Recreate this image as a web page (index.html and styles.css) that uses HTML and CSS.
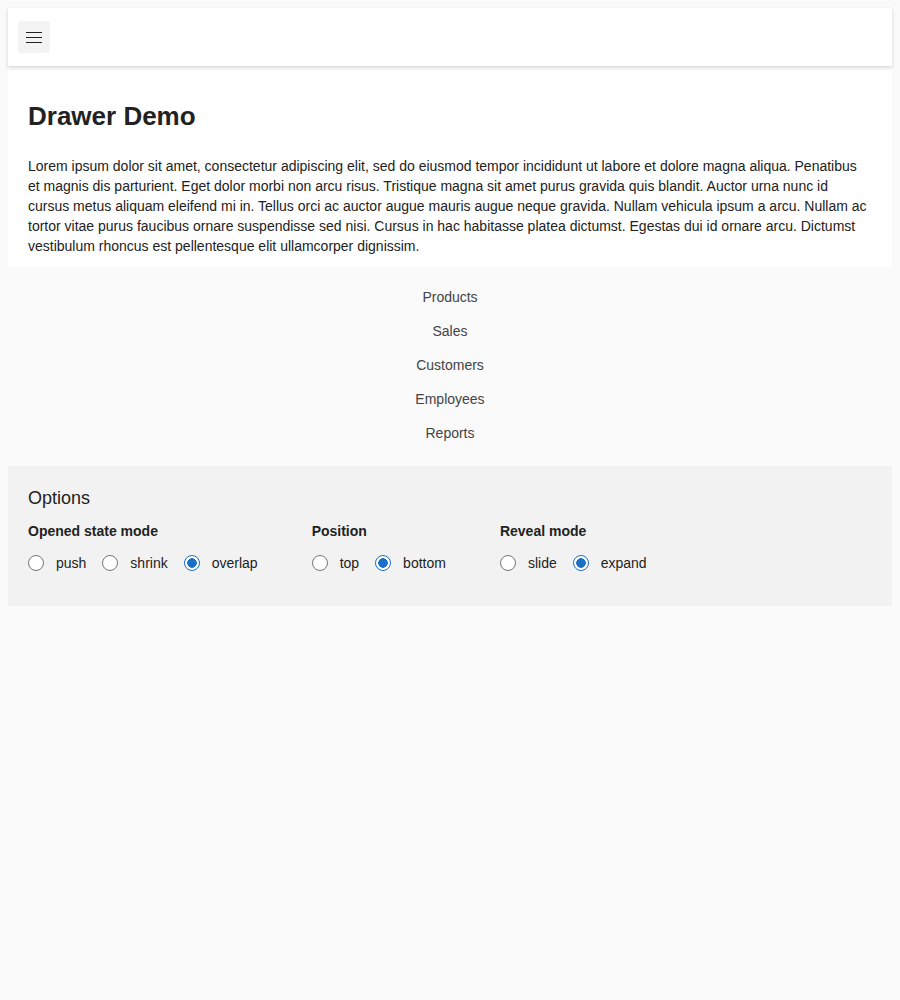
FILE: index.html
```html
<!DOCTYPE html>
<html lang="en">
<head>
<meta charset="utf-8">
<title>Drawer Demo</title>
<link rel="stylesheet" href="styles.css">
</head>
<body>
<header class="toolbar">
  <button class="menu-btn" type="button" aria-label="Menu">
    <svg width="16" height="12" viewBox="0 0 16 12"><path d="M0 1.5H16M0 6.5H16M0 11.5H16" stroke="#222" stroke-width="1" fill="none"/></svg>
  </button>
</header>
<main class="content">
  <h1 class="title">Drawer Demo</h1>
  <p class="text">Lorem ipsum dolor sit amet, consectetur adipiscing elit, sed do eiusmod tempor incididunt ut labore et dolore magna aliqua. Penatibus et magnis dis parturient. Eget dolor morbi non arcu risus. Tristique magna sit amet purus gravida quis blandit. Auctor urna nunc id cursus metus aliquam eleifend mi in. Tellus orci ac auctor augue mauris augue neque gravida. Nullam vehicula ipsum a arcu. Nullam ac tortor vitae purus faucibus ornare suspendisse sed nisi. Cursus in hac habitasse platea dictumst. Egestas dui id ornare arcu. Dictumst vestibulum rhoncus est pellentesque elit ullamcorper dignissim.</p>
</main>
<nav class="drawer">
  <div class="drawer-item">Products</div>
  <div class="drawer-item">Sales</div>
  <div class="drawer-item">Customers</div>
  <div class="drawer-item">Employees</div>
  <div class="drawer-item">Reports</div>
</nav>
<section class="options">
  <div class="options-title">Options</div>
  <div class="groups">
    <div class="group">
      <div class="group-label">Opened state mode</div>
      <div class="radios">
        <label class="radio"><input type="radio" name="mode"><span>push</span></label>
        <label class="radio"><input type="radio" name="mode"><span>shrink</span></label>
        <label class="radio"><input type="radio" name="mode" checked><span>overlap</span></label>
      </div>
    </div>
    <div class="group">
      <div class="group-label">Position</div>
      <div class="radios">
        <label class="radio"><input type="radio" name="pos"><span>top</span></label>
        <label class="radio"><input type="radio" name="pos" checked><span>bottom</span></label>
      </div>
    </div>
    <div class="group">
      <div class="group-label">Reveal mode</div>
      <div class="radios">
        <label class="radio"><input type="radio" name="reveal"><span>slide</span></label>
        <label class="radio"><input type="radio" name="reveal" checked><span>expand</span></label>
      </div>
    </div>
  </div>
</section>
</body>
</html>
```

FILE: styles.css
```css
html, body {
  margin: 0;
  padding: 0;
}
body {
  background: #fafafa;
  padding: 8px;
  font-family: "Liberation Sans", Arial, sans-serif;
  color: #222;
  min-height: 1000px;
  box-sizing: border-box;
}
.toolbar {
  height: 58px;
  background: #fff;
  box-shadow: 0 2px 4px rgba(0,0,0,0.16);
  display: flex;
  align-items: center;
  padding: 0 10px;
  box-sizing: border-box;
  position: relative;
  z-index: 1;
}
.menu-btn {
  width: 32px;
  height: 32px;
  border: 0;
  border-radius: 3px;
  background: #f3f3f3;
  padding: 0;
  display: flex;
  align-items: center;
  justify-content: center;
  cursor: pointer;
}
.menu-btn svg {
  display: block;
}
.content {
  background: #fff;
  padding: 20px 20px 10px;
}
.title {
  margin: 15px 0 0;
  font-size: 26px;
  line-height: 30px;
  font-weight: bold;
  color: #222;
}
.text {
  margin: 25px 0 0;
  font-size: 14px;
  line-height: 20px;
  color: #222;
}
.drawer {
  padding: 14px 0 16px;
  display: flex;
  flex-direction: column;
  align-items: center;
}
.drawer-item {
  height: 34px;
  line-height: 34px;
  font-size: 14px;
  color: #444;
}
.options {
  background: #f2f2f2;
  padding: 20px 20px 33px;
  height: 140px;
  box-sizing: border-box;
}
.options-title {
  font-size: 18px;
  line-height: 24px;
  color: #222;
}
.groups {
  display: flex;
  gap: 38px;
  margin-top: 11px;
}
.group-label {
  font-size: 14px;
  line-height: 20px;
  font-weight: bold;
  color: #222;
}
.radios {
  display: flex;
  margin-top: 12px;
}
.radio {
  display: flex;
  align-items: center;
  height: 20px;
  font-size: 14px;
  color: #222;
  margin-right: 16px;
}
.radio input {
  appearance: none;
  -webkit-appearance: none;
  width: 16px;
  height: 16px;
  margin: 0 12px 0 0;
  border: 1px solid #767676;
  border-radius: 50%;
  background: #fff;
  box-sizing: border-box;
}
.radio input:checked {
  border-color: #1a6fc6;
  background: radial-gradient(circle, #1a6fc6 0 4.5px, #fff 5px);
}
```
